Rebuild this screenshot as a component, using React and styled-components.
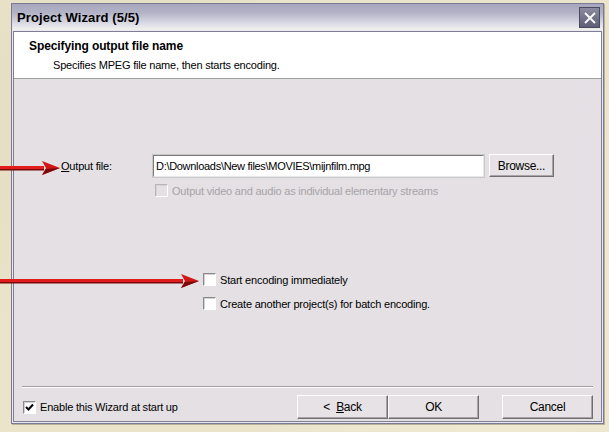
import React from "react";
import styled, { createGlobalStyle } from "styled-components";

const GlobalStyle = createGlobalStyle`
  body {
    margin: 0;
    background: #ebe4cb;
    font-family: "Liberation Sans", Arial, sans-serif;
    font-size: 11px;
    letter-spacing: -0.2px;
    color: #000;
  }
`;

const Page = styled.div`
  position: relative;
  width: 609px;
  height: 432px;
  padding: 3px 5px 0 11px;
  box-sizing: border-box;
  background:
    radial-gradient(circle at 20% 30%, rgba(200, 185, 140, 0.25), transparent 40%),
    radial-gradient(circle at 80% 70%, rgba(255, 250, 230, 0.4), transparent 45%),
    #ebe4cb;
`;

const Window = styled.div`
  width: 593px;
  height: 421px;
  box-sizing: border-box;
  border: 1px solid #7a7a96;
  background: #e8e8ee;
  display: flex;
  flex-direction: column;
  box-shadow: 1px 1px 0 #b9b29a;
`;

const TitleBar = styled.div`
  height: 26px;
  flex: none;
  display: flex;
  align-items: center;
  justify-content: space-between;
  padding: 1px 3px 0 5px;
  box-sizing: border-box;
  background: linear-gradient(#a6a6bd 0%, #b4b4c8 35%, #d6d6e2 70%, #f2f1ee 100%);
`;

const Title = styled.span`
  font-weight: bold;
  font-size: 13px;
  letter-spacing: 0.1px;
`;

const CloseButton = styled.div`
  width: 21px;
  height: 21px;
  box-sizing: border-box;
  border: 1px solid #4a4a5e;
  background: linear-gradient(#8a8aa0, #5e5e74);
  display: flex;
  align-items: center;
  justify-content: center;
`;

const Client = styled.div`
  flex: 1;
  margin: 1px;
  border: 1px solid #7e7e94;
  display: flex;
  flex-direction: column;
  background: #e4e0e4;
`;

const Header = styled.div`
  height: 47px;
  flex: none;
  background: #fff;
  border-bottom: 1px solid #a0a0a0;
  padding: 7px 0 0 15px;
  box-sizing: border-box;
`;

const HeaderTitle = styled.div`
  font-weight: bold;
  font-size: 12px;
  letter-spacing: -0.1px;
`;

const HeaderSub = styled.div`
  margin-top: 6px;
  padding-left: 24px;
`;

const Body = styled.div`
  flex: 1;
  display: flex;
  flex-direction: column;
  padding: 0 8px 2px 8px;
`;

const FileRow = styled.div`
  margin-top: 75px;
  display: flex;
  align-items: center;
  padding-left: 39px;
`;

const Label = styled.label`
  width: 92px;
`;

const TextBox = styled.div`
  width: 331px;
  height: 22px;
  box-sizing: border-box;
  background: #fff;
  border: 1px solid;
  border-color: #7a7a7a #e8e8e8 #e8e8e8 #7a7a7a;
  outline: 1px solid #c8c8c8;
  display: flex;
  align-items: center;
  padding-left: 2px;
  font-size: 11px;
  letter-spacing: -0.3px;
`;

const Button = styled.div`
  width: ${(p) => p.$w || 90}px;
  height: ${(p) => p.$h || 24}px;
  box-sizing: border-box;
  border: 1px solid;
  border-color: #fff #6e6e6e #6e6e6e #fff;
  box-shadow: inset -1px -1px 0 #a8a4a8;
  background: #e6e2e6;
  display: flex;
  align-items: center;
  justify-content: center;
  font-size: 12px;
  letter-spacing: -0.3px;
`;

const CheckRow = styled.div`
  display: flex;
  align-items: center;
  gap: 4px;
  margin-top: ${(p) => p.$top || 0}px;
  padding-left: ${(p) => p.$left || 0}px;
  color: ${(p) => (p.$disabled ? "#a7a3a7" : "#000")};
`;

const Box = styled.span`
  width: 13px;
  height: 13px;
  flex: none;
  box-sizing: border-box;
  border: 1px solid;
  border-color: ${(p) => (p.$disabled ? "#b8b4b8 #fff #fff #b8b4b8" : "#8a8a8a #fff #fff #8a8a8a")};
  background: ${(p) => (p.$disabled ? "#e4e0e4" : "#fff")};
  box-shadow: inset 1px 1px 0 ${(p) => (p.$disabled ? "#d6d2d6" : "#d4d0d4")};
  display: flex;
  align-items: center;
  justify-content: center;
`;

const Spacer = styled.div`
  flex: 1;
`;

const Separator = styled.div`
  height: 0;
  border-top: 1px solid #a0a0a0;
  border-bottom: 1px solid #fff;
`;

const Footer = styled.div`
  display: flex;
  align-items: center;
  margin-top: 7px;
  padding-left: 1px;
`;

const Buttons = styled.div`
  margin-left: auto;
  display: flex;
`;

const Gap = styled.div`
  width: ${(p) => p.$w}px;
  flex: none;
`;

const Arrow = styled.svg`
  position: absolute;
  left: 0;
  top: ${(p) => p.$top}px;
`;

const Check = () => (
  <svg width="9" height="9" viewBox="0 0 9 9">
    <path d="M1 4 L3.5 6.5 L8 1.5" stroke="#000" strokeWidth="2" fill="none" />
  </svg>
);

const RedArrow = ({ top, length }) => (
  <Arrow $top={top} width={length} height="16" viewBox={`0 0 ${length} 16`}>
    <rect x="0" y="6" width={length - 16} height="4" fill="#e21b1b" />
    <rect x="0" y="9" width={length - 16} height="1.5" fill="#7a0a0a" />
    <polygon points={`${length - 18},1 ${length},8 ${length - 18},15 ${length - 14},8`} fill="#d41515" />
    <polygon points={`${length - 18},15 ${length},8 ${length - 14},9`} fill="#7a0a0a" />
  </Arrow>
);

export default function App() {
  return (
    <>
      <GlobalStyle />
      <Page>
        <Window>
          <TitleBar>
            <Title>Project Wizard (5/5)</Title>
            <CloseButton>
              <svg width="12" height="12" viewBox="0 0 12 12">
                <path d="M1 1 L11 11 M11 1 L1 11" stroke="#fff" strokeWidth="1.8" />
              </svg>
            </CloseButton>
          </TitleBar>
          <Client>
            <Header>
              <HeaderTitle>Specifying output file name</HeaderTitle>
              <HeaderSub>Specifies MPEG file name, then starts encoding.</HeaderSub>
            </Header>
            <Body>
              <FileRow>
                <Label>
                  <u>O</u>utput file:
                </Label>
                <TextBox>D:\Downloads\New files\MOVIES\mijnfilm.mpg</TextBox>
                <Gap $w={5} />
                <Button $w={65} $h={23}>Browse...</Button>
              </FileRow>
              <CheckRow $top={7} $left={133} $disabled>
                <Box $disabled />
                Output video and audio as individual elementary streams
              </CheckRow>
              <CheckRow $top={76} $left={181}>
                <Box />
                Start encoding immediately
              </CheckRow>
              <CheckRow $top={11} $left={181}>
                <Box />
                Create another project(s) for batch encoding.
              </CheckRow>
              <Spacer />
              <Separator />
              <Footer>
                <CheckRow>
                  <Box>
                    <Check />
                  </Box>
                  Enable this Wizard at start up
                </CheckRow>
                <Buttons>
                  <Button $w={91}>
                    &lt;&nbsp;&nbsp;<u>B</u>ack
                  </Button>
                  <Button $w={91}>OK</Button>
                  <Gap $w={23} />
                  <Button $w={91}>Cancel</Button>
                </Buttons>
              </Footer>
            </Body>
          </Client>
        </Window>
        <RedArrow top={160} length={60} />
        <RedArrow top={273} length={199} />
      </Page>
    </>
  );
}
